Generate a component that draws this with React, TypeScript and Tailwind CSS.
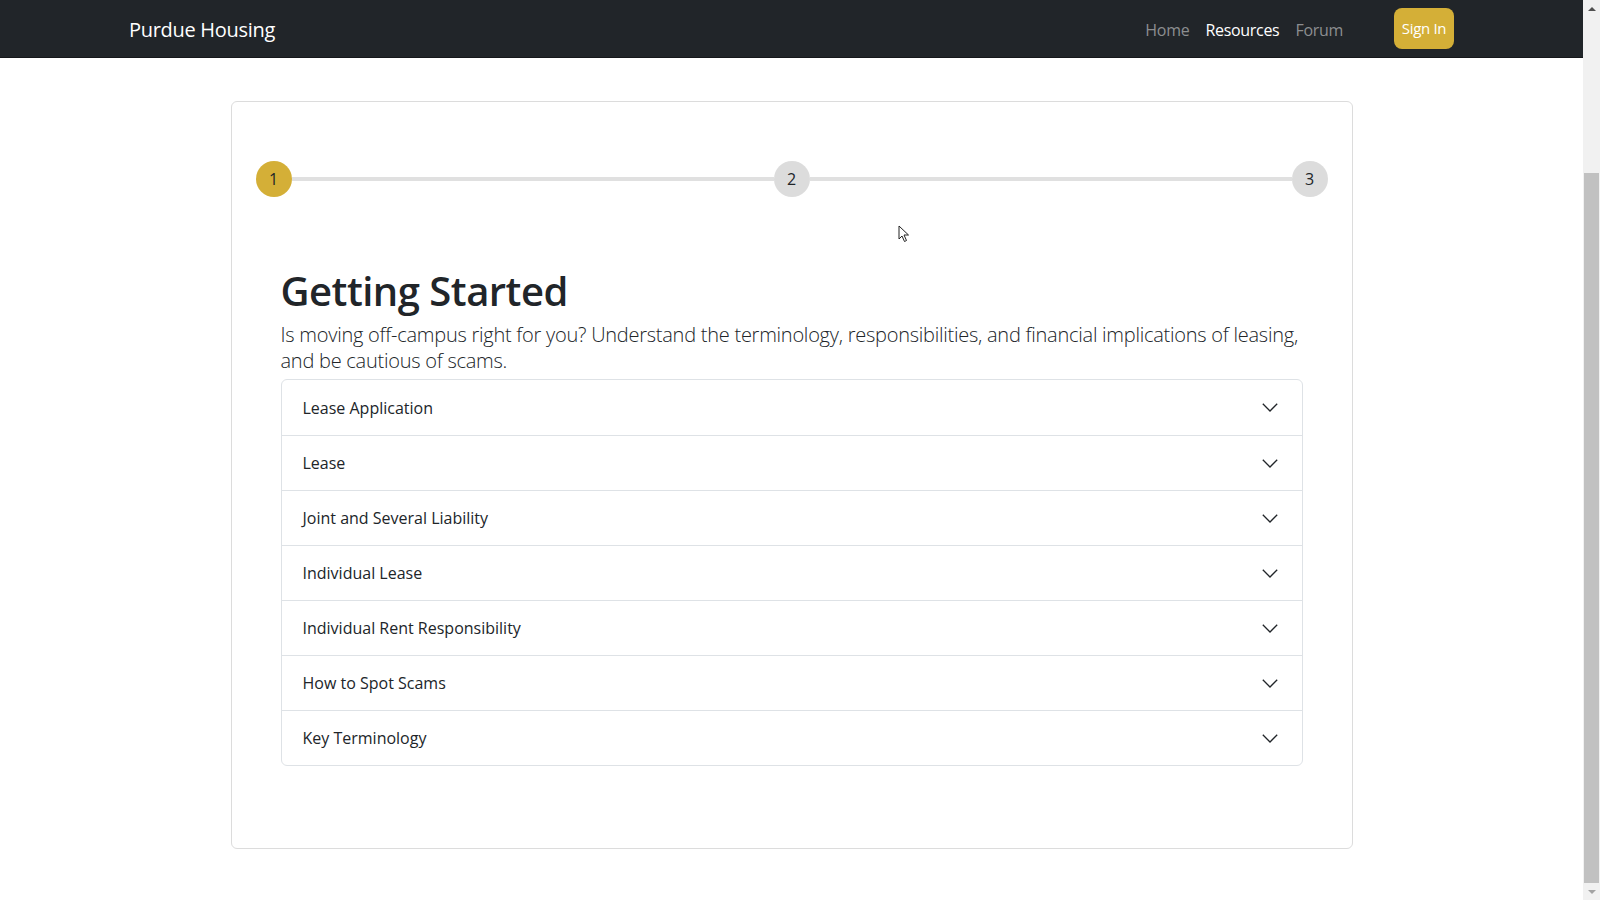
const sections = [
  'Lease Application',
  'Lease',
  'Joint and Several Liability',
  'Individual Lease',
  'Individual Rent Responsibility',
  'How to Spot Scams',
  'Key Terminology',
];

function Step({ n, active }: { n: number; active?: boolean }) {
  return (
    <div
      className={
        'w-9 h-9 rounded-full flex items-center justify-center text-[16px] text-[#212529] shrink-0 ' +
        (active ? 'bg-[#d4af37]' : 'bg-[#dcdcdc]')
      }
    >
      {n}
    </div>
  );
}

export default function App() {
  return (
    <div className="flex h-screen w-full overflow-hidden bg-white font-['Open_Sans',sans-serif]">
      <div className="flex-1 flex flex-col min-w-0">
        {/* Navbar */}
        <nav className="h-[58px] bg-[#212529] shrink-0 border-b border-[#15171a]">
          <div className="mx-auto w-[1325px] h-full flex items-center justify-between">
            <span className="pt-[2px] text-[20px] text-white tracking-[-0.3px]">Purdue Housing</span>
            <div className="flex items-center">
              <div className="flex items-center pt-[2px] text-[16px] tracking-[-0.3px]">
                <a className="px-2 text-[#8c8e90]">Home</a>
                <a className="px-2 text-white">Resources</a>
                <a className="px-2 text-[#8c8e90]">Forum</a>
              </div>
              <button className="ml-[43px] w-[60px] h-[41px] rounded-lg bg-[#d4af37] text-white text-[15px] tracking-[-0.3px]">
                Sign In
              </button>
            </div>
          </div>
        </nav>

        {/* Main */}
        <main className="flex-1 pt-[43px]">
          <div className="relative mx-auto w-[1122px] h-[748px] border border-[#dcdcdc] rounded-[6px] pt-[59px]">
            {/* Stepper */}
            <div className="flex items-center px-6">
              <Step n={1} active />
              <div className="flex-1 h-1 bg-[#e0e0e0]" />
              <Step n={2} />
              <div className="flex-1 h-1 bg-[#e0e0e0]" />
              <Step n={3} />
            </div>

            {/* cursor */}
            <svg className="absolute left-[666px] top-[123px]" width="12" height="18" viewBox="0 0 12 18">
              <path d="M1 1 L1 14 L4 11 L6.5 16.5 L8.5 15.5 L6 10 L10.5 10 Z" fill="#fff" stroke="#222" strokeWidth="1" />
            </svg>

            <div className="px-[49px]">
              <h1 className="mt-[70px] text-[40px] leading-[48px] font-semibold text-[#212529] tracking-[-0.5px]">
                Getting Started
              </h1>
              <p className="mt-[7px] text-[20px] leading-[25.5px] font-light text-[#212529] tracking-[-0.25px]">
                Is moving off-campus right for you? Understand the terminology, responsibilities, and financial implications of leasing,
                <br />
                and be cautious of scams.
              </p>

              <div className="mt-[6px] border border-[#dee2e6] rounded-[6px]">
                {sections.map((s, i) => (
                  <div
                    key={s}
                    className={
                      'h-[55px] pl-[21px] pr-[24px] flex items-center justify-between text-[16px] text-[#212529] ' +
                      (i > 0 ? 'border-t border-[#dee2e6]' : '')
                    }
                  >
                    <span>{s}</span>
                    <svg width="16" height="9" viewBox="0 0 16 9" fill="none">
                      <path d="M0.8 0.8 L8 8 L15.2 0.8" stroke="#212529" strokeWidth="1.3" />
                    </svg>
                  </div>
                ))}
              </div>
            </div>
          </div>
        </main>
      </div>

      {/* Scrollbar */}
      <div className="w-[17px] bg-[#f1f1f1] flex flex-col shrink-0">
        <div className="h-[17px] flex items-center justify-center">
          <div className="w-0 h-0 border-l-[4px] border-r-[4px] border-b-[4px] border-l-transparent border-r-transparent border-b-[#505050]" />
        </div>
        <div className="h-[156px]" />
        <div className="flex-1 mx-[1px] bg-[#c1c1c1]" />
        <div className="h-[17px] flex items-center justify-center">
          <div className="w-0 h-0 border-l-[4px] border-r-[4px] border-t-[4px] border-l-transparent border-r-transparent border-t-[#a3a3a3]" />
        </div>
      </div>
    </div>
  );
}
